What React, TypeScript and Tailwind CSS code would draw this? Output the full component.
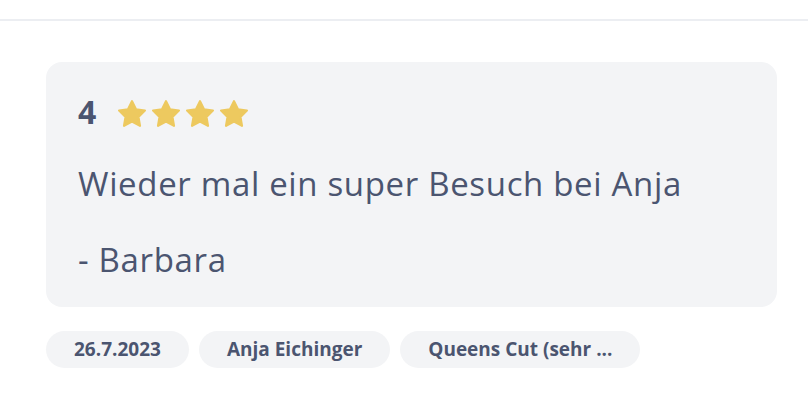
import React from 'react';

const Star: React.FC = () => (
  <svg viewBox="1.8 1.8 20.4 19.5" className="w-[28px] h-[27px]" aria-hidden>
    <path
      d="M12 2.6l2.9 5.9 6.5.9-4.7 4.6 1.1 6.5L12 17.4l-5.8 3.1 1.1-6.5-4.7-4.6 6.5-.9z"
      fill="#edc95f"
      stroke="#edc95f"
      strokeWidth="1.6"
      strokeLinejoin="round"
    />
  </svg>
);

const chips = ['26.7.2023', 'Anja Eichinger', 'Queens Cut (sehr ...'];

export default function App() {
  return (
    <div className="w-[808px] h-[404px] bg-white text-[#4b5570] overflow-hidden" style={{ fontFamily: '"Open Sans", sans-serif' }}>
      <div className="h-[21px] border-b-2 border-[#eceef2]" />
      <div className="pl-[46px] pr-[31px] pt-[41px]">
        <div className="bg-[#f3f4f6] rounded-2xl px-8 pt-[30px] pb-[25px]">
          <div className="flex items-center gap-[22px] h-[40px]">
            <span className="text-[32px] font-bold leading-none">4</span>
            <div className="flex gap-[6px] pt-[3px]">
              <Star />
              <Star />
              <Star />
              <Star />
            </div>
          </div>
          <p className="text-[33px] leading-[44px] mt-[30px] tracking-[0.02em]">Wieder mal ein super Besuch bei Anja</p>
          <p className="text-[33px] leading-[44px] mt-[32px] tracking-[0.02em]">- Barbara</p>
        </div>
        <div className="flex gap-[10px] mt-[24px]">
          {chips.map((c) => (
            <span key={c} className="h-[37px] px-[28px] rounded-full bg-[#f3f4f6] flex items-center text-[19px] font-bold">
              {c}
            </span>
          ))}
        </div>
      </div>
    </div>
  );
}
